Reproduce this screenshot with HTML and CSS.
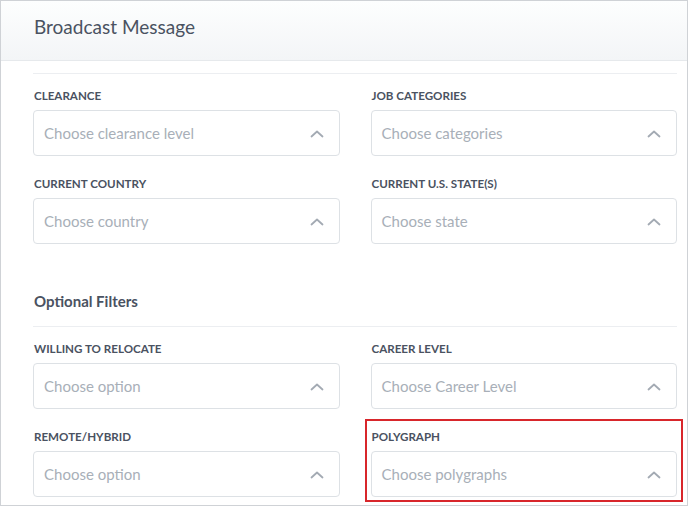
FILE: index.html
```html
<!DOCTYPE html>
<html>
<head>
<meta charset="utf-8">
<link rel="stylesheet" href="styles.css">
</head>
<body>
<div class="frame">
  <header class="modal-header">
    <h1 class="modal-title">Broadcast Message</h1>
  </header>
  <main class="modal-body">
    <hr class="divider">
    <div class="grid">
      <div class="field">
        <div class="label">Clearance</div>
        <div class="select"><span class="placeholder">Choose clearance level</span><svg class="chev" width="14" height="8" viewBox="0 0 14 8"><path d="M1.5 6.5 L7 1.5 L12.5 6.5" fill="none" stroke="#a3aab3" stroke-width="1.8" stroke-linecap="round" stroke-linejoin="round"/></svg></div>
      </div>
      <div class="field">
        <div class="label">Job Categories</div>
        <div class="select"><span class="placeholder">Choose categories</span><svg class="chev" width="14" height="8" viewBox="0 0 14 8"><path d="M1.5 6.5 L7 1.5 L12.5 6.5" fill="none" stroke="#a3aab3" stroke-width="1.8" stroke-linecap="round" stroke-linejoin="round"/></svg></div>
      </div>
      <div class="field">
        <div class="label">Current Country</div>
        <div class="select"><span class="placeholder">Choose country</span><svg class="chev" width="14" height="8" viewBox="0 0 14 8"><path d="M1.5 6.5 L7 1.5 L12.5 6.5" fill="none" stroke="#a3aab3" stroke-width="1.8" stroke-linecap="round" stroke-linejoin="round"/></svg></div>
      </div>
      <div class="field">
        <div class="label">Current U.S. State(s)</div>
        <div class="select"><span class="placeholder">Choose state</span><svg class="chev" width="14" height="8" viewBox="0 0 14 8"><path d="M1.5 6.5 L7 1.5 L12.5 6.5" fill="none" stroke="#a3aab3" stroke-width="1.8" stroke-linecap="round" stroke-linejoin="round"/></svg></div>
      </div>
    </div>
    <h2 class="section-title">Optional Filters</h2>
    <hr class="divider">
    <div class="grid">
      <div class="field">
        <div class="label">Willing to Relocate</div>
        <div class="select"><span class="placeholder">Choose option</span><svg class="chev" width="14" height="8" viewBox="0 0 14 8"><path d="M1.5 6.5 L7 1.5 L12.5 6.5" fill="none" stroke="#a3aab3" stroke-width="1.8" stroke-linecap="round" stroke-linejoin="round"/></svg></div>
      </div>
      <div class="field">
        <div class="label">Career Level</div>
        <div class="select"><span class="placeholder">Choose Career Level</span><svg class="chev" width="14" height="8" viewBox="0 0 14 8"><path d="M1.5 6.5 L7 1.5 L12.5 6.5" fill="none" stroke="#a3aab3" stroke-width="1.8" stroke-linecap="round" stroke-linejoin="round"/></svg></div>
      </div>
      <div class="field">
        <div class="label">Remote/Hybrid</div>
        <div class="select"><span class="placeholder">Choose option</span><svg class="chev" width="14" height="8" viewBox="0 0 14 8"><path d="M1.5 6.5 L7 1.5 L12.5 6.5" fill="none" stroke="#a3aab3" stroke-width="1.8" stroke-linecap="round" stroke-linejoin="round"/></svg></div>
      </div>
      <div class="field highlight">
        <div class="label">Polygraph</div>
        <div class="select"><span class="placeholder">Choose polygraphs</span><svg class="chev" width="14" height="8" viewBox="0 0 14 8"><path d="M1.5 6.5 L7 1.5 L12.5 6.5" fill="none" stroke="#a3aab3" stroke-width="1.8" stroke-linecap="round" stroke-linejoin="round"/></svg></div>
      </div>
    </div>
  </main>
</div>
</body>
</html>
```
FILE: styles.css
```css
* { box-sizing: border-box; }
html, body { margin: 0; padding: 0; background: #fff; }
body { font-family: Lato, "Liberation Sans", sans-serif; color: #4a5261; }
.frame {
  width: 688px;
  height: 506px;
  border: 1px solid #cfd2d6;
  overflow: hidden;
  background: #fff;
}
.modal-header {
  height: 60px;
  border-bottom: 1px solid #e6e9ec;
  background: linear-gradient(#fdfefe, #f3f5f7);
  padding-left: 33px;
  display: flex;
  align-items: center;
}
.modal-title {
  margin: 0 0 9px 0;
  font-size: 19px;
  font-weight: 400;
  color: #4a5261;
}
.modal-body {
  padding: 12px 10px 0 32px;
}
.divider {
  margin: 0;
  border: 0;
  border-top: 1px solid #eceef1;
  height: 0;
}
.grid {
  display: grid;
  grid-template-columns: 1fr 1fr;
  column-gap: 31px;
  row-gap: 19px;
  margin-top: 13px;
}
.field { position: relative; }
.label {
  font-size: 11.6px;
  font-weight: 700;
  text-transform: uppercase;
  line-height: 18px;
  color: #4a5261;
  margin-bottom: 5px;
  padding-left: 1px;
}
.select {
  height: 46px;
  border: 1px solid #dde1e5;
  border-radius: 4px;
  display: flex;
  align-items: center;
  justify-content: space-between;
  padding: 0 15px 0 10px;
}
.placeholder {
  font-size: 15px;
  color: #a8afb8;
}
.chev { display: block; margin-top: 2px; }
.section-title {
  margin: 47px 0 15px 0;
  padding-left: 1px;
  font-size: 15px;
  font-weight: 700;
  line-height: 20px;
  color: #4a5261;
}
.highlight::after {
  content: "";
  position: absolute;
  top: -9px;
  left: -6px;
  right: -6px;
  bottom: -5px;
  border: 2px solid #d8262b;
  pointer-events: none;
}
```
